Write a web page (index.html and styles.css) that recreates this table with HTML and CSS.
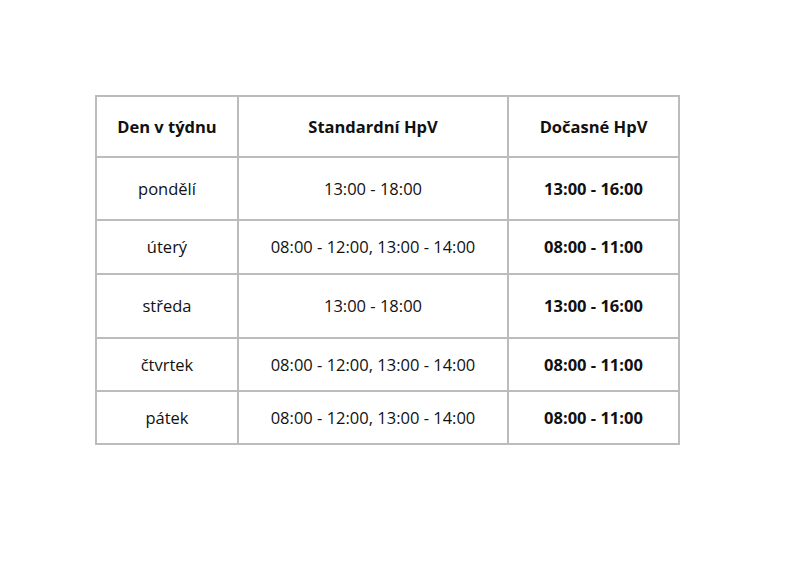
FILE: index.html
```html
<!DOCTYPE html>
<html lang="cs">
<head>
<meta charset="utf-8">
<title>Hodiny pro veřejnost</title>
<link rel="stylesheet" href="styles.css">
</head>
<body>
<div class="page">
  <table class="hours">
    <colgroup>
      <col class="c-day">
      <col class="c-std">
      <col class="c-tmp">
    </colgroup>
    <thead>
      <tr>
        <th>Den v týdnu</th>
        <th>Standardní HpV</th>
        <th>Dočasné HpV</th>
      </tr>
    </thead>
    <tbody>
      <tr><td>pondělí</td><td>13:00 - 18:00</td><td class="b">13:00 - 16:00</td></tr>
      <tr><td>úterý</td><td>08:00 - 12:00, 13:00 - 14:00</td><td class="b">08:00 - 11:00</td></tr>
      <tr><td>středa</td><td>13:00 - 18:00</td><td class="b">13:00 - 16:00</td></tr>
      <tr><td>čtvrtek</td><td>08:00 - 12:00, 13:00 - 14:00</td><td class="b">08:00 - 11:00</td></tr>
      <tr><td>pátek</td><td>08:00 - 12:00, 13:00 - 14:00</td><td class="b">08:00 - 11:00</td></tr>
    </tbody>
  </table>
</div>
</body>
</html>
```
FILE: styles.css
```css
html, body {
  margin: 0;
  padding: 0;
  background: #ffffff;
}
.page {
  width: 800px;
  height: 564px;
  box-sizing: border-box;
  padding: 95px 0 0 95px;
  font-family: "Open Sans", "Liberation Sans", sans-serif;
  font-size: 16.5px;
  color: #111111;
}
.hours {
  border-collapse: collapse;
  table-layout: fixed;
  width: 583px;
}
.c-day { width: 142px; }
.c-std { width: 270px; }
.c-tmp { width: 171px; }
.hours th,
.hours td {
  border: 2px solid #bcbcbc;
  padding: 0;
  text-align: center;
  vertical-align: middle;
  line-height: 20px;
}
.hours th { font-weight: 700; }
.hours td.b { font-weight: 700; }
.hours thead tr { height: 61px; }
.hours tbody tr:nth-child(1) { height: 63px; }
.hours tbody tr:nth-child(2) { height: 54px; }
.hours tbody tr:nth-child(3) { height: 64px; }
.hours tbody tr:nth-child(4) { height: 53px; }
.hours tbody tr:nth-child(5) { height: 53px; }
```
